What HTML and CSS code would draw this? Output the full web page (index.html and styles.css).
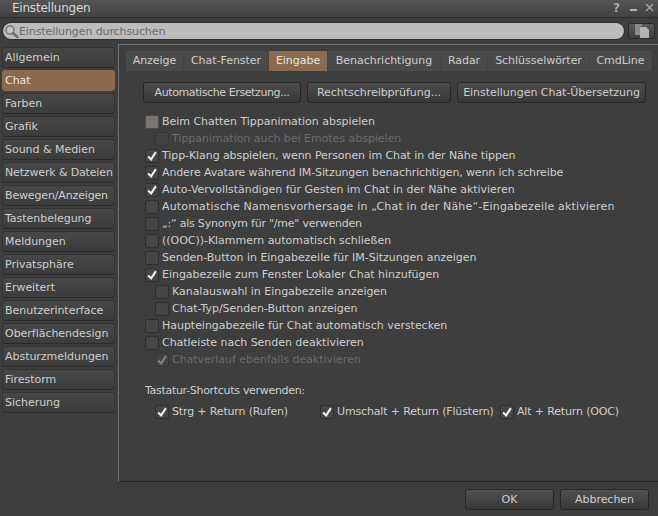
FILE: index.html
```html
<!DOCTYPE html>
<html lang="de">
<head>
<meta charset="utf-8">
<title>Einstellungen</title>
<link rel="stylesheet" href="styles.css">
</head>
<body>
<div class="window">
  <header class="titlebar">
    <span class="title">Einstellungen</span>
    <div class="winctl">
      <span class="help">?</span>
      <span class="min"></span>
      <svg class="close" width="9" height="9" viewBox="0 0 9 9"><path d="M1 1L8 8M8 1L1 8" stroke="#a8a8a8" stroke-width="1.3" fill="none"/></svg>
    </div>
  </header>
  <div class="searchrow">
    <div class="search">
      <svg class="lens" width="15" height="15" viewBox="0 0 15 15"><circle cx="6" cy="6" r="4" fill="#c4c4c4" stroke="#7c7c7c" stroke-width="1.6"/><path d="M9 9L13.5 13" stroke="#6e6e6e" stroke-width="2.4" stroke-linecap="round"/></svg>
      <span>Einstellungen durchsuchen</span>
    </div>
    <button class="copybtn" type="button">
      <svg width="16" height="14" viewBox="0 0 16 14"><path d="M1 0H8V2H6V11H1Z" fill="#8a8a8a"/><path d="M6 3H12L15 6V14H6Z" fill="#b4b4b4"/></svg>
    </button>
  </div>
  <div class="main">
    <nav class="sidebar">
      <div class="navitem">Allgemein</div>
      <div class="navitem active">Chat</div>
      <div class="navitem">Farben</div>
      <div class="navitem">Grafik</div>
      <div class="navitem">Sound &amp; Medien</div>
      <div class="navitem tight">Netzwerk &amp; Dateien</div>
      <div class="navitem tight">Bewegen/Anzeigen</div>
      <div class="navitem">Tastenbelegung</div>
      <div class="navitem">Meldungen</div>
      <div class="navitem">Privatsphäre</div>
      <div class="navitem">Erweitert</div>
      <div class="navitem">Benutzerinterface</div>
      <div class="navitem">Oberflächendesign</div>
      <div class="navitem">Absturzmeldungen</div>
      <div class="navitem">Firestorm</div>
      <div class="navitem">Sicherung</div>
    </nav>
    <section class="panel">
      <div class="tabs">
        <div class="tab t1">Anzeige</div>
        <div class="tab t2">Chat-Fenster</div>
        <div class="tab t3 active">Eingabe</div>
        <div class="tab t4">Benachrichtigung</div>
        <div class="tab t5">Radar</div>
        <div class="tab t6">Schlüsselwörter</div>
        <div class="tab t7">CmdLine</div>
      </div>
      <div class="actions">
        <button class="btn b1" type="button">Automatische Ersetzung...</button>
        <button class="btn b2" type="button">Rechtschreibprüfung...</button>
        <button class="btn b3" type="button">Einstellungen Chat-Übersetzung</button>
      </div>
      <div class="options">
        <label class="row"><span class="box hover"></span>Beim Chatten Tippanimation abspielen</label>
        <label class="row sub off"><span class="box"></span>Tippanimation auch bei Emotes abspielen</label>
        <label class="row sp-a"><span class="box on"><svg viewBox="0 0 14 14"><path d="M2.5 7.5L6 11L11.5 2.5" stroke="#f2f2f2" stroke-width="2.4" fill="none"/></svg></span>Tipp-Klang abspielen, wenn Personen im Chat in der Nähe tippen</label>
        <label class="row sp-b"><span class="box on"><svg viewBox="0 0 14 14"><path d="M2.5 7.5L6 11L11.5 2.5" stroke="#f2f2f2" stroke-width="2.4" fill="none"/></svg></span>Andere Avatare während IM-Sitzungen benachrichtigen, wenn ich schreibe</label>
        <label class="row"><span class="box on"><svg viewBox="0 0 14 14"><path d="M2.5 7.5L6 11L11.5 2.5" stroke="#f2f2f2" stroke-width="2.4" fill="none"/></svg></span>Auto-Vervollständigen für Gesten im Chat in der Nähe aktivieren</label>
        <label class="row sp-wide"><span class="box"></span>Automatische Namensvorhersage in „Chat in der Nähe“-Eingabezeile aktivieren</label>
        <label class="row sp-c"><span class="box"></span>„:“ als Synonym für "/me" verwenden</label>
        <label class="row"><span class="box"></span>((OOC))-Klammern automatisch schließen</label>
        <label class="row"><span class="box"></span>Senden-Button in Eingabezeile für IM-Sitzungen anzeigen</label>
        <label class="row"><span class="box on"><svg viewBox="0 0 14 14"><path d="M2.5 7.5L6 11L11.5 2.5" stroke="#f2f2f2" stroke-width="2.4" fill="none"/></svg></span>Eingabezeile zum Fenster Lokaler Chat hinzufügen</label>
        <label class="row sub"><span class="box"></span>Kanalauswahl in Eingabezeile anzeigen</label>
        <label class="row sub"><span class="box"></span>Chat-Typ/Senden-Button anzeigen</label>
        <label class="row"><span class="box"></span>Haupteingabezeile für Chat automatisch verstecken</label>
        <label class="row"><span class="box"></span>Chatleiste nach Senden deaktivieren</label>
        <label class="row sub off"><span class="box on"><svg viewBox="0 0 14 14"><path d="M2.5 7.5L6 11L11.5 2.5" stroke="#828282" stroke-width="2.4" fill="none"/></svg></span>Chatverlauf ebenfalls deaktivieren</label>
      </div>
      <div class="shortcuts-label">Tastatur-Shortcuts verwenden:</div>
      <div class="shortcuts">
        <label class="row s1"><span class="box on"><svg viewBox="0 0 14 14"><path d="M2.5 7.5L6 11L11.5 2.5" stroke="#f2f2f2" stroke-width="2.4" fill="none"/></svg></span>Strg + Return (Rufen)</label>
        <label class="row s2"><span class="box on"><svg viewBox="0 0 14 14"><path d="M2.5 7.5L6 11L11.5 2.5" stroke="#f2f2f2" stroke-width="2.4" fill="none"/></svg></span>Umschalt + Return (Flüstern)</label>
        <label class="row s3"><span class="box on"><svg viewBox="0 0 14 14"><path d="M2.5 7.5L6 11L11.5 2.5" stroke="#f2f2f2" stroke-width="2.4" fill="none"/></svg></span>Alt + Return (OOC)</label>
      </div>
    </section>
  </div>
  <footer class="footer">
    <button class="btn fb" type="button">OK</button>
    <button class="btn fb" type="button">Abbrechen</button>
  </footer>
</div>
</body>
</html>
```
FILE: styles.css
```css
* { box-sizing: border-box; }
html, body { margin: 0; padding: 0; }
body {
  width: 658px;
  height: 516px;
  overflow: hidden;
  background: #3e3e3e;
  color: #cecece;
  font-family: "DejaVu Sans", sans-serif;
  font-size: 11px;
  letter-spacing: -0.03px;
}
.window { width: 658px; height: 516px; display: flex; flex-direction: column; }

.titlebar {
  height: 18px;
  flex: none;
  display: flex;
  justify-content: space-between;
  align-items: center;
  padding: 0 4px 2px 12px;
  background: linear-gradient(#555, #414141);
  border-bottom: 1px solid #2e2e2e;
}
.title { font-size: 12px; letter-spacing: -0.22px; color: #d8d8d8; }
.winctl { display: flex; align-items: center; gap: 8px; }
.help { font-weight: bold; font-size: 12px; margin-right: 2px; color: #a8a8a8; }
.min { width: 7px; height: 2px; margin-top: 5px; background: #b4b4b4; }
.close { display: block; }

.searchrow { height: 26px; flex: none; display: flex; align-items: flex-start; padding: 4px 3px 0 3px; gap: 4px; }
.search {
  flex: 1;
  height: 16px;
  margin-top: 1px;
  display: flex;
  align-items: center;
  gap: 0;
  padding-left: 1px;
  letter-spacing: -0.1px;
  background: #bcbcbc;
  border-radius: 8px;
  color: #6a6a6a;
  box-shadow: 0 0 0 1px #2c2c2c;
}
.copybtn {
  width: 27px;
  height: 16px;
  padding: 0;
  margin-top: 1px;
  display: flex;
  align-items: center;
  justify-content: center;
  background: linear-gradient(#5a5a5a, #3e3e3e);
  border: 1px solid #2a2a2a;
  border-radius: 3px;
}

.main { flex: none; height: 438px; display: flex; }
.sidebar { width: 118px; flex: none; padding: 3px 3px 0 2px; display: flex; flex-direction: column; gap: 2px; }
.navitem {
  height: 21px;
  line-height: 20px;
  padding-left: 2px;
  white-space: nowrap;
  border-radius: 3px;
  background: linear-gradient(#474747, #3c3c3c);
  border: 1px solid #333;
  border-bottom-color: #2a2a2a;
}
.navitem.tight { letter-spacing: -0.15px; }
.navitem.active { background: #8c6a4f; border-color: #8c6a4f; color: #e6e6e6; }

.panel {
  flex: 1;
  padding: 6px 0 0 7px;
  border-top: 1px solid #6e6e6e;
  border-left: 1px solid #6e6e6e;
  border-bottom: 1px solid #262626;
}
.tabs { display: flex; height: 20px; }
.tab { height: 20px; line-height: 19px; text-align: center; white-space: nowrap; background: #4a4a4a; border-right: 1px solid #444; }
.tab.active { background: #8c6a4f; color: #e6e6e6; }
.t1 { width: 58px; }
.t2 { width: 85px; }
.t3 { width: 59px; }
.t4 { width: 113px; }
.t5 { width: 47px; }
.t6 { width: 102px; }
.t7 { width: 62px; }

.actions { display: flex; gap: 6px; margin: 11px 0 0 17px; }
.btn {
  height: 21px;
  padding: 0;
  font: inherit;
  letter-spacing: inherit;
  color: #cecece;
  background: linear-gradient(#4c4c4c, #383838);
  border: 1px solid #272727;
  border-radius: 3px;
}
.b1 { width: 158px; letter-spacing: -0.4px; }
.b2 { width: 144px; }
.b3 { width: 189px; }

.options { margin: 10px 0 0 19px; display: flex; flex-direction: column; }
.row { height: 17px; display: flex; align-items: center; gap: 3px; white-space: nowrap; }
.row.sub { padding-left: 10px; gap: 3px; }
.row.off { color: #6c6c6c; }
.sp-a { letter-spacing: -0.08px; }
.sp-b { letter-spacing: -0.13px; }
.sp-c { letter-spacing: -0.22px; }
.sp-wide { letter-spacing: 0.17px; }
.box {
  width: 14px;
  height: 14px;
  flex: none;
  background: #454545;
  border: 1px solid #2e2e2e;
  border-radius: 2px;
  display: block;
}
.box svg { display: block; width: 12px; height: 12px; }
.box.hover { background: #7a7472; border-color: #54483f; }
.row.off .box { background: #424242; border-color: #353535; }

.shortcuts-label { margin: 14px 0 0 19px; height: 17px; line-height: 17px; letter-spacing: -0.3px; }
.shortcuts { margin: 4px 0 0 29px; letter-spacing: -0.15px; display: flex; }
.s1 { width: 165px; }
.s2 { width: 180px; }

.footer { flex: 1; display: flex; justify-content: flex-end; gap: 6px; padding: 7px 9px 0 0; }
.fb { width: 89px; background: linear-gradient(#505050, #383838); }
```
